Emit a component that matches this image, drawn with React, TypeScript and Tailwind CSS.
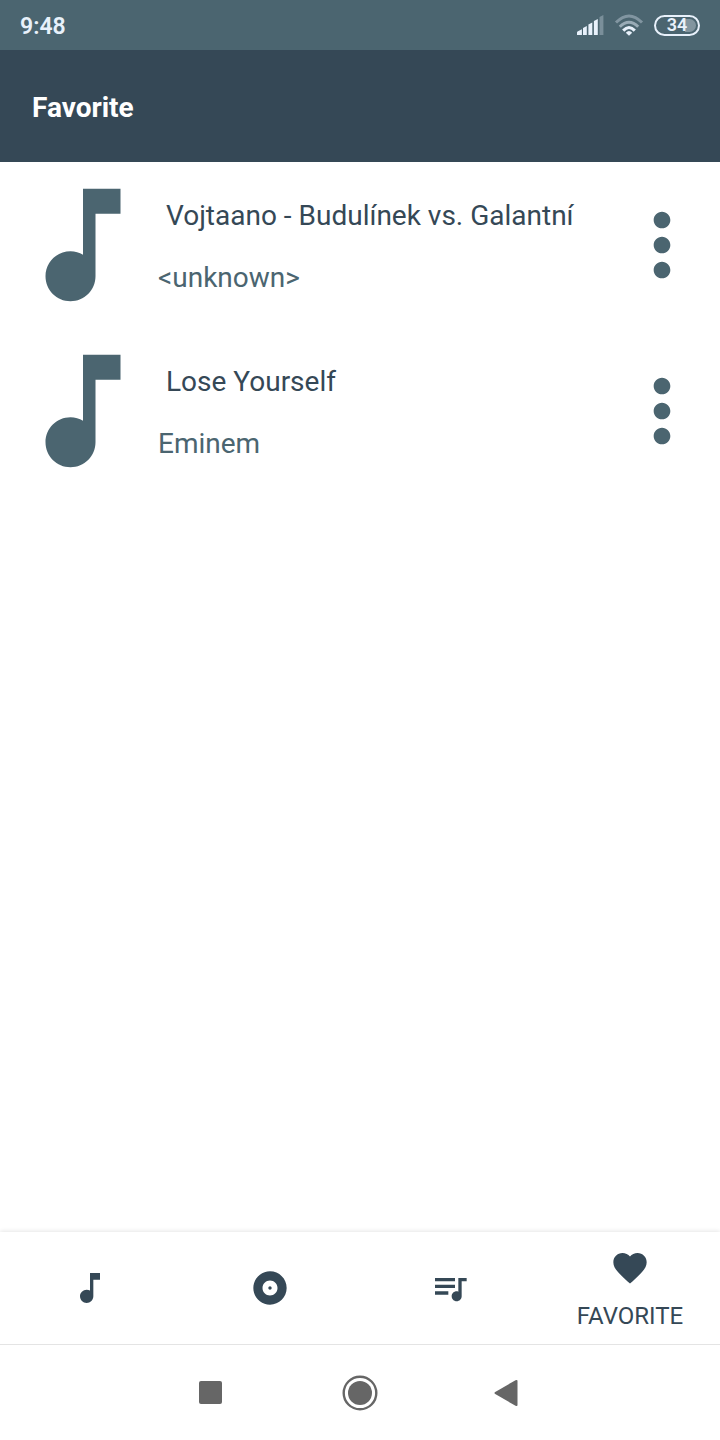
import type { ReactNode } from "react";

const NOTE_PATH =
  "M12 3v10.55c-.59-.34-1.27-.55-2-.55-2.21 0-4 1.79-4 4s1.79 4 4 4 4-1.79 4-4V7h4V3h-6z";
const MORE_PATH =
  "M12 8c1.1 0 2-.9 2-2s-.9-2-2-2-2 .9-2 2 .9 2 2 2zm0 2c-1.1 0-2 .9-2 2s.9 2 2 2 2-.9 2-2-.9-2-2-2zm0 6c-1.1 0-2 .9-2 2s.9 2 2 2 2-.9 2-2-.9-2-2-2z";
const ALBUM_PATH =
  "M12 2C6.48 2 2 6.48 2 12s4.48 10 10 10 10-4.48 10-10S17.52 2 12 2zm0 14.5c-2.49 0-4.5-2.01-4.5-4.5S9.51 7.5 12 7.5s4.5 2.01 4.5 4.5-2.01 4.5-4.5 4.5zm0-5.5c-.55 0-1 .45-1 1s.45 1 1 1 1-.45 1-1-.45-1-1-1z";
const QUEUE_PATH =
  "M15 6H3v2h12V6zm0 4H3v2h12v-2zM3 16h8v-2H3v2zM17 6v8.18c-.31-.11-.65-.18-1-.18-1.66 0-3 1.34-3 3s1.34 3 3 3 3-1.34 3-3V8h3V6h-5z";
const HEART_PATH =
  "M12 21.35l-1.45-1.32C5.4 15.36 2 12.28 2 8.5 2 5.42 4.42 3 7.5 3c1.74 0 3.41.81 4.5 2.09C13.09 3.81 14.76 3 16.5 3 19.58 3 22 5.42 22 8.5c0 3.78-3.4 6.86-8.55 11.54L12 21.35z";

const songs = [
  { title: "Vojtaano - Budulínek vs. Galantní", artist: "<unknown>" },
  { title: "Lose Yourself", artist: "Eminem" },
];

const tabs = [
  { name: "Songs", path: NOTE_PATH, active: false },
  { name: "Albums", path: ALBUM_PATH, active: false },
  { name: "Playlists", path: QUEUE_PATH, active: false },
  { name: "FAVORITE", path: HEART_PATH, active: true },
];

function Icon({ path, className }: { path: string; className: string }) {
  return (
    <svg viewBox="0 0 24 24" fill="currentColor" aria-hidden="true" className={className}>
      <path d={path} />
    </svg>
  );
}

function SignalIcon() {
  return (
    <svg viewBox="0 0 28 20" className="h-5 w-7" fill="#e8f1fb" aria-hidden="true">
      <path d="M1 20v-2.600Q1 16.700 2 16.200L5.900 14.200V20z" />
      <path d="M7 20v-7l3.800-2V20z" />
      <path d="M12.400 20V9.500l3.900-2V20z" />
      <path d="M17.900 20V6l3.900-2V20z" />
      <path d="M23.500 20V2l3.900-2V20z" opacity="0.3" />
    </svg>
  );
}

function WifiIcon() {
  return (
    <svg viewBox="0 0 30 22" className="h-[22px] w-[30px]" fill="none" stroke="#e8f1fb" strokeWidth="3" aria-hidden="true">
      <path d="M2 8.500Q15-4.500 28 8.500" opacity="0.35" />
      <path d="M5.800 12.800Q15 3.500 24.200 12.800" opacity="0.5" />
      <path d="M9.200 16.600Q15 10.500 20.800 16.600" />
      <path d="M15 21.800l-3.200-3Q15 15.300 18.200 18.800z" fill="#e8f1fb" stroke="none" />
    </svg>
  );
}

function Battery() {
  return (
    <span className="flex h-[21px] w-[46px] items-center rounded-full border-2 border-[#e8f1fb] p-[2px]">
      <span className="flex h-full w-full items-center justify-center rounded-full bg-linear-to-r from-transparent from-70% to-[#82959f] to-70% text-lg leading-none font-semibold">
        34
      </span>
    </span>
  );
}

function SystemButton({ label, children }: { label: string; children: ReactNode }) {
  return (
    <button type="button" aria-label={label} className="flex h-full w-[150px] items-center justify-center">
      {children}
    </button>
  );
}

export default function App() {
  return (
    <div className="flex min-h-screen flex-col bg-white font-['Roboto',sans-serif] text-[#354856]">
      <div className="flex h-[50px] items-center justify-between bg-[#4b6570] px-5 text-[#e8f1fb]">
        <span className="pt-1 text-[23px] leading-8 font-semibold">9:48</span>
        <div className="flex items-center gap-2.5">
          <SignalIcon />
          <WifiIcon />
          <Battery />
        </div>
      </div>

      <header className="flex h-28 items-center bg-[#354856] px-8 pt-1">
        <h1 className="text-[28px] leading-10 font-bold text-white">Favorite</h1>
      </header>

      <main className="flex-1">
        <ul>
          {songs.map((song) => (
            <li key={song.title} className="flex items-center p-2">
              <Icon path={NOTE_PATH} className="size-[150px] shrink-0 text-[#4b6570]" />
              <div className="flex min-w-0 flex-1 flex-col gap-[22px] pt-1">
                <p className="truncate pl-2 text-[28px] leading-10">{song.title}</p>
                <p className="truncate text-[28px] leading-10 text-[#4b6570]">{song.artist}</p>
              </div>
              <button type="button" aria-label={`Options for ${song.title}`} className="shrink-0 text-[#4b6570]">
                <Icon path={MORE_PATH} className="size-[100px]" />
              </button>
            </li>
          ))}
        </ul>
      </main>

      <nav aria-label="Library" className="grid h-28 grid-cols-4 bg-white shadow-[0_-1px_4px_rgba(0,0,0,0.1)]">
        {tabs.map((tab) => (
          <button
            key={tab.name}
            type="button"
            aria-label={tab.name}
            aria-current={tab.active ? "page" : undefined}
            className="flex flex-col items-center justify-center gap-4"
          >
            <Icon path={tab.path} className="size-10" />
            {tab.active && <span className="text-2xl leading-6">{tab.name}</span>}
          </button>
        ))}
      </nav>

      <div className="flex h-24 items-center justify-center border-t border-[#e4e4e4] bg-white text-[#666666]">
        <SystemButton label="Recent apps">
          <span className="size-[23px] rounded-xs bg-[#666666]" />
        </SystemButton>
        <SystemButton label="Home">
          <svg viewBox="0 0 36 36" className="size-9" aria-hidden="true">
            <circle cx="18" cy="18" r="16.300" fill="none" stroke="currentColor" strokeWidth="2.400" />
            <circle cx="18" cy="18" r="12" fill="currentColor" />
          </svg>
        </SystemButton>
        <SystemButton label="Back">
          <svg viewBox="0 0 32 28" className="h-7 w-8" fill="currentColor" aria-hidden="true">
            <path d="M1.200 13.100L21.500 1.200Q23.500.3 23.500 2v24Q23.500 27.700 21.500 26.700L1.200 15Q-.3 14 1.200 13.100z" />
          </svg>
        </SystemButton>
      </div>
    </div>
  );
}
